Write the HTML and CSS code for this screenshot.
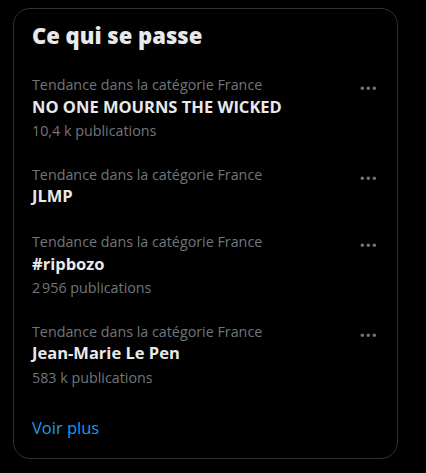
FILE: index.html
```html
<!DOCTYPE html>
<html lang="fr">
<head>
<meta charset="utf-8">
<link rel="stylesheet" href="styles.css">
</head>
<body>
<section class="card">
  <h2 class="heading">Ce qui se passe</h2>
  <div class="trend">
    <div class="trend-body">
      <div class="meta">Tendance dans la catégorie France</div>
      <div class="name">NO ONE MOURNS THE WICKED</div>
      <div class="count">10,4&nbsp;k publications</div>
    </div>
    <svg class="more" viewBox="0 0 24 24"><path d="M3 12c0-1.1.9-2 2-2s2 .9 2 2-.9 2-2 2-2-.9-2-2zm9 2c1.1 0 2-.9 2-2s-.9-2-2-2-2 .9-2 2 .9 2 2 2zm7 0c1.1 0 2-.9 2-2s-.9-2-2-2-2 .9-2 2 .9 2 2 2z"/></svg>
  </div>
  <div class="trend">
    <div class="trend-body">
      <div class="meta">Tendance dans la catégorie France</div>
      <div class="name">JLMP</div>
    </div>
    <svg class="more" viewBox="0 0 24 24"><path d="M3 12c0-1.1.9-2 2-2s2 .9 2 2-.9 2-2 2-2-.9-2-2zm9 2c1.1 0 2-.9 2-2s-.9-2-2-2-2 .9-2 2 .9 2 2 2zm7 0c1.1 0 2-.9 2-2s-.9-2-2-2-2 .9-2 2 .9 2 2 2z"/></svg>
  </div>
  <div class="trend">
    <div class="trend-body">
      <div class="meta">Tendance dans la catégorie France</div>
      <div class="name">#ripbozo</div>
      <div class="count">2&#8239;956 publications</div>
    </div>
    <svg class="more" viewBox="0 0 24 24"><path d="M3 12c0-1.1.9-2 2-2s2 .9 2 2-.9 2-2 2-2-.9-2-2zm9 2c1.1 0 2-.9 2-2s-.9-2-2-2-2 .9-2 2 .9 2 2 2zm7 0c1.1 0 2-.9 2-2s-.9-2-2-2-2 .9-2 2 .9 2 2 2z"/></svg>
  </div>
  <div class="trend">
    <div class="trend-body">
      <div class="meta">Tendance dans la catégorie France</div>
      <div class="name">Jean-Marie Le Pen</div>
      <div class="count">583&nbsp;k publications</div>
    </div>
    <svg class="more" viewBox="0 0 24 24"><path d="M3 12c0-1.1.9-2 2-2s2 .9 2 2-.9 2-2 2-2-.9-2-2zm9 2c1.1 0 2-.9 2-2s-.9-2-2-2-2 .9-2 2 .9 2 2 2zm7 0c1.1 0 2-.9 2-2s-.9-2-2-2-2 .9-2 2 .9 2 2 2z"/></svg>
  </div>
  <a class="show-more" href="#">Voir plus</a>
</section>
</body>
</html>
```
FILE: styles.css
```css
html, body {
  margin: 0;
  background: #000;
}
body {
  padding: 8px 0 0 13px;
  font-family: "Open Sans", "Liberation Sans", sans-serif;
  color: #e7e9ea;
}
.card {
  box-sizing: border-box;
  width: 385px;
  border: 1px solid #2f3336;
  border-radius: 17px;
  display: flex;
  flex-direction: column;
}
.heading {
  margin: 0;
  padding: 13px 18px 15px;
  font-size: 22px;
  line-height: 26px;
  font-weight: 800;
}
.trend {
  display: flex;
  align-items: flex-start;
  padding: 13px 18px;
}
.trend-body {
  flex: 1;
  display: flex;
  flex-direction: column;
}
.meta {
  font-size: 14.3px;
  line-height: 17.6px;
  color: #71767b;
}
.name {
  padding-top: 2px;
  font-size: 16.5px;
  line-height: 22px;
  font-weight: 700;
}
.count {
  padding-top: 4.4px;
  font-size: 14.3px;
  line-height: 17.6px;
  color: #71767b;
}
.more {
  width: 20.6px;
  height: 20.6px;
  margin-top: 2px;
  fill: #71767b;
}
.show-more {
  padding: 17.6px 18px 19px;
  font-size: 16.5px;
  line-height: 22px;
  color: #1d9bf0;
  text-decoration: none;
}
```
